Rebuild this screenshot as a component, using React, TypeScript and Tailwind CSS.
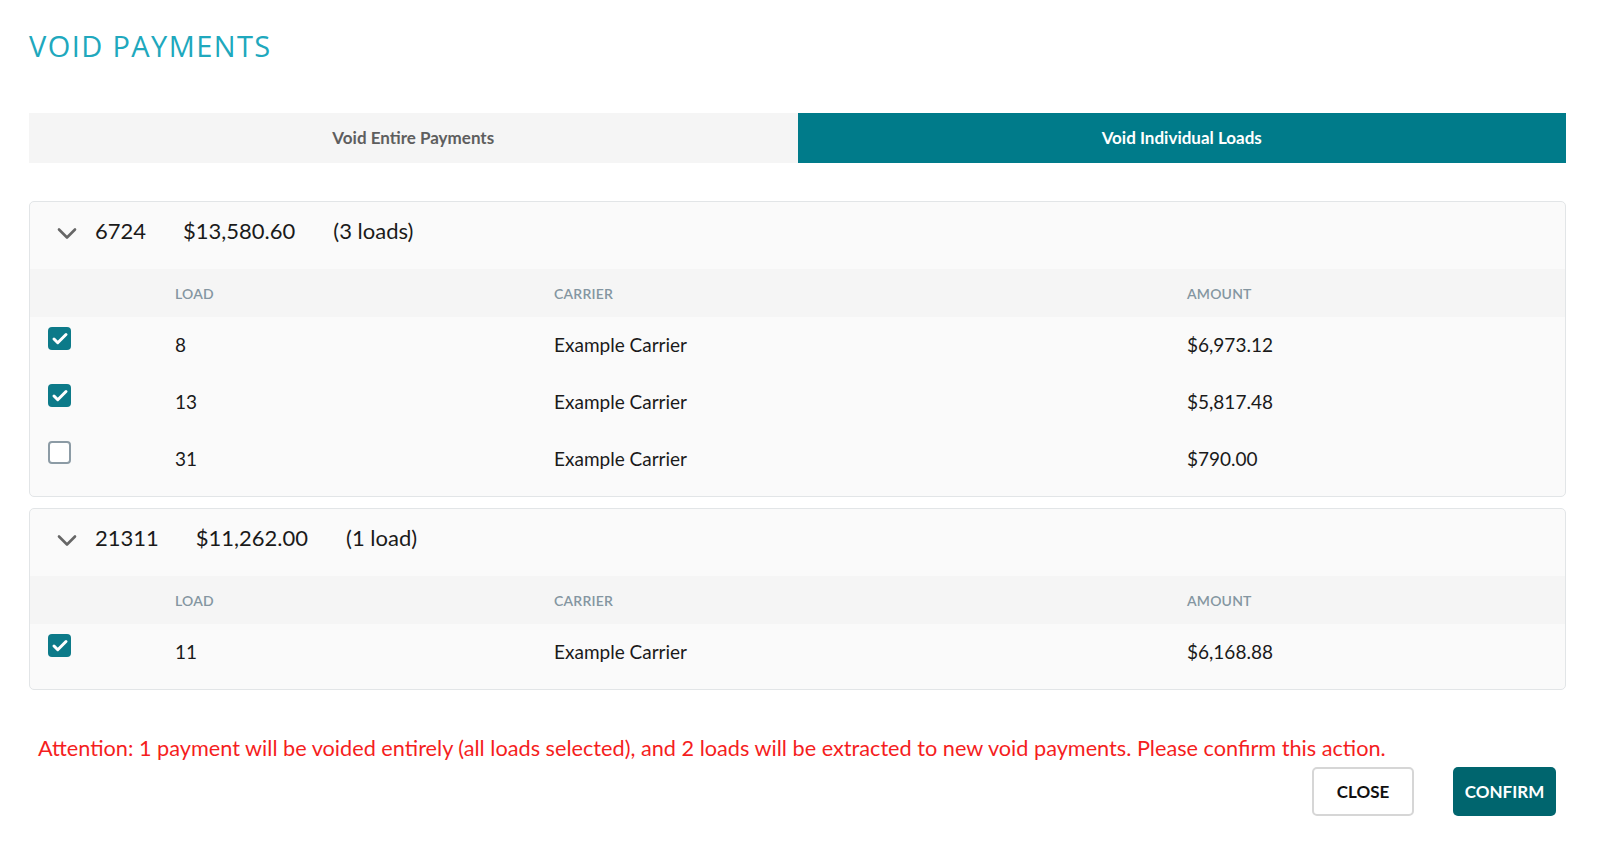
import { Check } from "lucide-react";

type Load = { id: string; carrier: string; amount: string; checked: boolean };
type Payment = { number: string; total: string; count: string; loads: Load[] };

const payments: Payment[] = [
  {
    number: "6724",
    total: "$13,580.60",
    count: "(3 loads)",
    loads: [
      { id: "8", carrier: "Example Carrier", amount: "$6,973.12", checked: true },
      { id: "13", carrier: "Example Carrier", amount: "$5,817.48", checked: true },
      { id: "31", carrier: "Example Carrier", amount: "$790.00", checked: false },
    ],
  },
  {
    number: "21311",
    total: "$11,262.00",
    count: "(1 load)",
    loads: [{ id: "11", carrier: "Example Carrier", amount: "$6,168.88", checked: true }],
  },
];

function Checkbox({ checked }: { checked: boolean }) {
  if (checked) {
    return (
      <div className="w-[23px] h-[23px] rounded-[4px] bg-[#0c7a89] flex items-center justify-center">
        <Check size={18} strokeWidth={4} className="text-white" />
      </div>
    );
  }
  return <div className="w-[23px] h-[23px] rounded-[4px] border-[2.5px] border-[#8c9ba5] bg-white" />;
}

function Chevron() {
  return (
    <svg width="20" height="13" viewBox="0 0 20 13" className="mt-[6px]">
      <polyline points="2,2.5 10,10.5 18,2.5" fill="none" stroke="#666666" strokeWidth="2.6" strokeLinecap="round" strokeLinejoin="round" />
    </svg>
  );
}

function PaymentPanel({ payment }: { payment: Payment }) {
  return (
    <div className="rounded-[5px] border border-[#e2e5e7] bg-[#fafafa] pb-[8px]">
      <div className="h-[67px] flex items-center pb-[10px] pl-[27px] text-[22px] text-[#1a1a1a]">
        <Chevron />
        <span className="ml-[18px] mr-[37px]">{payment.number}</span>
        <span className="mr-[38px]">{payment.total}</span>
        <span>{payment.count}</span>
      </div>
      <div className="grid grid-cols-[145px_379px_633px_1fr] h-[48px] items-center bg-[#f5f5f5] text-[14px] font-semibold text-[#8496a1] tracking-[0.2px]">
        <div />
        <div>LOAD</div>
        <div>CARRIER</div>
        <div>AMOUNT</div>
      </div>
      {payment.loads.map((load) => (
        <div
          key={load.id}
          className="grid grid-cols-[145px_379px_633px_1fr] h-[57px] text-[19px] text-[#1a1a1a]"
        >
          <div className="pl-[18px] pt-[10px]">
            <Checkbox checked={load.checked} />
          </div>
          <div className="flex items-center">{load.id}</div>
          <div className="flex items-center">{load.carrier}</div>
          <div className="flex items-center">{load.amount}</div>
        </div>
      ))}
    </div>
  );
}

export default function App() {
  return (
    <div className="min-h-screen bg-white pl-[29px] pr-[34px] font-['Lato','Liberation_Sans',sans-serif]">
      <h1 className="pt-[26px] h-[66px] leading-[40px] mb-[47px] text-[29px] font-medium text-[#20a8bd] font-['Open_Sans','Liberation_Sans',sans-serif] tracking-[1.4px]">
        VOID PAYMENTS
      </h1>

      <div className="grid grid-cols-2 h-[50px] text-[17px] font-bold">
        <div className="bg-[#f5f5f5] text-[#5e5e5e] flex items-center justify-center">Void Entire Payments</div>
        <div className="bg-[#007b8a] text-white flex items-center justify-center">Void Individual Loads</div>
      </div>

      <div className="mt-[38px] flex flex-col gap-[11px]">
        {payments.map((p) => (
          <PaymentPanel key={p.number} payment={p} />
        ))}
      </div>

      <p className="mt-[44px] pl-[9px] leading-[28px] text-[21.7px] text-[#f51e1e]">
        Attention: 1 payment will be voided entirely (all loads selected), and 2 loads will be extracted to new void payments. Please confirm this action.
      </p>

      <div className="mt-[5px] pr-[10px] flex justify-end gap-[39px]">
        <button className="w-[102px] h-[49px] rounded-[5px] border-2 border-[#d6d6d6] bg-white text-[17px] font-bold text-[#111111]">
          CLOSE
        </button>
        <button className="w-[103px] h-[49px] rounded-[5px] bg-[#00656e] text-[17px] font-bold text-white">
          CONFIRM
        </button>
      </div>
    </div>
  );
}
